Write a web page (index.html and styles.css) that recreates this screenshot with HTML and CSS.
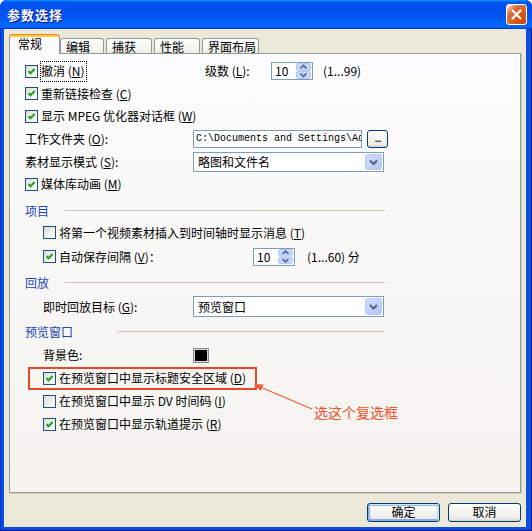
FILE: index.html
```html
<!DOCTYPE html>
<html lang="zh-CN">
<head>
    <meta charset="UTF-8">
    <title>参数选择</title>
    <link rel="stylesheet" href="styles.css">
</head>
<body>
<div class="window">
    <div class="titlebar">
        <span class="title">参数选择</span>
        <span class="close-btn">
            <svg width="13" height="13" viewBox="0 0 13 13"><path d="M2.5 2.5 L10.5 10.5 M10.5 2.5 L2.5 10.5" stroke="#fff" stroke-width="2.2" stroke-linecap="round"/></svg>
        </span>
    </div>

    <div class="client">
        <div class="tabs">
            <span class="tab active">常规</span>
            <span class="tab">编辑</span>
            <span class="tab t-wide">捕获</span>
            <span class="tab t-wide">性能</span>
            <span class="tab t-long">界面布局</span>
        </div>

        <div class="panel">
            <div class="group group-a">
                <div class="row">
                    <label class="check cell-first">
                        <span class="cb on"><svg width="11" height="11" viewBox="0 0 11 11"><path d="M2.5 5.2 L4.5 7.3 L8.6 3" fill="none" stroke="#21a121" stroke-width="2"/></svg></span>
                        <span class="focus">撤消 (<u>N</u>)</span>
                    </label>
                    <span class="lbl-levels">级数 (<u>L</u>):</span>
                    <span class="spin">
                        <span class="spin-val">10</span>
                        <svg class="spin-btns" width="15" height="16" viewBox="0 0 15 16"><rect x="0.5" y="0.5" width="14" height="7" rx="1.5" fill="#c6d6fb" stroke="#b4c7f5"/><rect x="0.5" y="8.5" width="14" height="7" rx="1.5" fill="#c6d6fb" stroke="#b4c7f5"/><path d="M4.5 5.5 L7.5 2.5 L10.5 5.5" fill="none" stroke="#4d6185" stroke-width="1.6"/><path d="M4.5 10.5 L7.5 13.5 L10.5 10.5" fill="none" stroke="#4d6185" stroke-width="1.6"/></svg>
                    </span>
                    <span class="range">(1...99)</span>
                </div>
                <div class="row">
                    <label class="check">
                        <span class="cb on"><svg width="11" height="11" viewBox="0 0 11 11"><path d="M2.5 5.2 L4.5 7.3 L8.6 3" fill="none" stroke="#21a121" stroke-width="2"/></svg></span>
                        重新链接检查 (<u>C</u>)
                    </label>
                </div>
                <div class="row">
                    <label class="check">
                        <span class="cb on"><svg width="11" height="11" viewBox="0 0 11 11"><path d="M2.5 5.2 L4.5 7.3 L8.6 3" fill="none" stroke="#21a121" stroke-width="2"/></svg></span>
                        显示 MPEG 优化器对话框 (<u>W</u>)
                    </label>
                </div>
                <div class="row">
                    <span class="field-label">工作文件夹 (<u>O</u>):</span>
                    <span class="textbox path">C:\Documents and Settings\Ad</span>
                    <span class="browse">...</span>
                </div>
                <div class="row">
                    <span class="field-label">素材显示模式 (<u>S</u>):</span>
                    <span class="select">
                        <span class="select-val">略图和文件名</span>
                        <svg class="drop" width="17" height="16" viewBox="0 0 17 16"><defs><linearGradient id="dg" x1="0" y1="0" x2="1" y2="1"><stop offset="0" stop-color="#d2defd"/><stop offset="1" stop-color="#b1c5f5"/></linearGradient></defs><rect x="0.5" y="0.5" width="16" height="15" rx="2" fill="url(#dg)" stroke="#b9cbf4"/><path d="M5 6.5 L8.5 10 L12 6.5" fill="none" stroke="#4d6185" stroke-width="2"/></svg>
                    </span>
                </div>
                <div class="row">
                    <label class="check">
                        <span class="cb on"><svg width="11" height="11" viewBox="0 0 11 11"><path d="M2.5 5.2 L4.5 7.3 L8.6 3" fill="none" stroke="#21a121" stroke-width="2"/></svg></span>
                        媒体库动画 (<u>M</u>)
                    </label>
                </div>
            </div>

            <div class="section"><span class="section-label">项目</span><span class="section-line"></span></div>
            <div class="group group-b">
                <div class="row">
                    <label class="check">
                        <span class="cb"></span>
                        将第一个视频素材插入到时间轴时显示消息 (<u>T</u>)
                    </label>
                </div>
                <div class="row">
                    <label class="check cell-autosave">
                        <span class="cb on"><svg width="11" height="11" viewBox="0 0 11 11"><path d="M2.5 5.2 L4.5 7.3 L8.6 3" fill="none" stroke="#21a121" stroke-width="2"/></svg></span>
                        自动保存间隔 (<u>V</u>)：
                    </label>
                    <span class="spin">
                        <span class="spin-val">10</span>
                        <svg class="spin-btns" width="15" height="15" viewBox="0 0 15 15"><rect x="0.5" y="0.5" width="14" height="6.5" rx="1.5" fill="#c6d6fb" stroke="#b4c7f5"/><rect x="0.5" y="8" width="14" height="6.5" rx="1.5" fill="#c6d6fb" stroke="#b4c7f5"/><path d="M4.5 5 L7.5 2.2 L10.5 5" fill="none" stroke="#4d6185" stroke-width="1.6"/><path d="M4.5 10 L7.5 12.8 L10.5 10" fill="none" stroke="#4d6185" stroke-width="1.6"/></svg>
                    </span>
                    <span class="range wide-gap">(1...60) 分</span>
                </div>
            </div>

            <div class="section"><span class="section-label">回放</span><span class="section-line"></span></div>
            <div class="group group-b playback">
                <div class="row">
                    <span class="field-label short">即时回放目标 (<u>G</u>):</span>
                    <span class="select tall">
                        <span class="select-val">预览窗口</span>
                        <svg class="drop" width="17" height="17" viewBox="0 0 17 17"><defs><linearGradient id="dg2" x1="0" y1="0" x2="1" y2="1"><stop offset="0" stop-color="#d2defd"/><stop offset="1" stop-color="#b1c5f5"/></linearGradient></defs><rect x="0.5" y="0.5" width="16" height="16" rx="2" fill="url(#dg2)" stroke="#b9cbf4"/><path d="M5 7 L8.5 10.5 L12 7" fill="none" stroke="#4d6185" stroke-width="2"/></svg>
                    </span>
                </div>
            </div>

            <div class="section tight"><span class="section-label wide">预览窗口</span><span class="section-line short"></span></div>
            <div class="group group-c">
                <div class="row">
                    <span class="field-label color-label">背景色:</span>
                    <span class="swatch"></span>
                </div>
                <div class="row marked">
                    <label class="check">
                        <span class="cb on"><svg width="11" height="11" viewBox="0 0 11 11"><path d="M2.5 5.2 L4.5 7.3 L8.6 3" fill="none" stroke="#21a121" stroke-width="2"/></svg></span>
                        在预览窗口中显示标题安全区域 (<u>D</u>)
                    </label>
                </div>
                <div class="row">
                    <label class="check">
                        <span class="cb"></span>
                        在预览窗口中显示 DV 时间码 (<u>I</u>)
                    </label>
                </div>
                <div class="row">
                    <label class="check">
                        <span class="cb on"><svg width="11" height="11" viewBox="0 0 11 11"><path d="M2.5 5.2 L4.5 7.3 L8.6 3" fill="none" stroke="#21a121" stroke-width="2"/></svg></span>
                        在预览窗口中显示轨道提示 (<u>R</u>)
                    </label>
                </div>
            </div>
        </div>

        <div class="buttons">
            <span class="btn default">确定</span>
            <span class="btn">取消</span>
        </div>
    </div>

    <!-- annotation drawn over the dialog -->
    <svg class="arrow" width="532" height="531" viewBox="0 0 532 531">
        <line x1="312" y1="409" x2="258" y2="386" stroke="#f05a36" stroke-width="1.2"/>
        <polygon points="254,384 263.7,384.6 260.6,391" fill="#f05a36"/>
    </svg>
    <span class="note">选这个复选框</span>
</div>
</body>
</html>
```

FILE: styles.css
```css
* {
    box-sizing: border-box;
}
html, body {
    margin: 0;
    padding: 0;
}
body {
    width: 532px;
    height: 531px;
    overflow: hidden;
    background: #fff;
    color: #000;
    font-family: "Noto Sans CJK SC", "Liberation Sans", sans-serif;
    font-size: 12px;
    line-height: 16px;
}
u {
    text-decoration: underline;
    text-underline-offset: 1px;
}

/* window frame */
.window {
    position: relative;
    width: 532px;
    height: 531px;
    display: flex;
    flex-direction: column;
    background: #0a4fe0;
    border-radius: 7px 7px 0 0;
    box-shadow: inset -1px -1px #00138c, inset 1px 1px #0831d9;
    overflow: hidden;
}
.titlebar {
    flex: none;
    height: 29px;
    display: flex;
    align-items: center;
    justify-content: space-between;
    padding: 0 5px 0 7px;
    background: linear-gradient(180deg, #0997ff, #0053ee 8%, #0050ee 40%, #06f 88%, #06f 93%, #005bff 95%, #003dd7 96%, #003dd7);
    border-radius: 7px 7px 0 0;
}
.title {
    color: #fff;
    font-weight: bold;
    font-size: 13px;
    letter-spacing: 1px;
    text-shadow: 1px 1px #0f1089;
}
.close-btn {
    width: 21px;
    height: 21px;
    border: 1px solid #fff;
    border-radius: 3px;
    display: flex;
    align-items: center;
    justify-content: center;
    background: radial-gradient(circle at 90% 90%, #cc4600 0%, #dc6527 55%, #cd7546 70%, #ffccb2 90%, #fff 100%);
}

.client {
    flex: 1;
    margin: 0 6px 4px 4px;
    padding: 5px 5px 0 5px;
    background: #ece9d8;
    display: flex;
    flex-direction: column;
}

/* tabs */
.tabs {
    position: relative;
    z-index: 1;
    display: flex;
    align-items: flex-end;
    height: 20px;
    margin-bottom: -1px;
}
.tab {
    width: 44px;
    height: 15px;
    margin-bottom: 1px;
    margin-left: 2px;
    padding-left: 5px;
    line-height: 15px;
    border: 1px solid #919b9c;
    border-bottom: none;
    border-radius: 3px 3px 0 0;
    background: linear-gradient(180deg, #fff, #fafaf9 26%, #f0f0ea 95%, #ecebe6);
}
.tab.t-wide {
    width: 46px;
}
.tab.t-long {
    width: 57px;
}
.tab.active {
    width: 51px;
    height: 20px;
    margin: 0;
    padding-left: 8px;
    line-height: 18px;
    background: #fcfcfe;
    border-top: 1px solid #e68b2c;
    box-shadow: inset 0 2px #ffc73c;
}
.tab.active + .tab {
    margin-left: 0;
}

/* tab page */
.panel {
    flex: none;
    height: 440px;
    padding-top: 6px;
    border: 1px solid #919b9c;
    background: linear-gradient(180deg, #fcfcfe, #f4f3ee);
    box-shadow: 1px 1px 0 #d0cebf;
}
.row {
    display: flex;
    align-items: center;
}
.group-a {
    padding-left: 15px;
}
.group-a .row {
    height: 22.6px;
}
.group-b {
    padding-left: 33px;
}
.group-b .row {
    height: 22px;
}
.group-b .row + .row {
    margin-top: 2px;
}
.group-b.playback {
    padding-top: 2px;
}
.group-c {
    padding-left: 33px;
    padding-top: 1px;
}
.group-c .row {
    height: 23px;
}

.section {
    display: flex;
    align-items: center;
    height: 22px;
    margin-top: 4px;
    padding-left: 15px;
}
.section.tight {
    margin-top: 3px;
}
.section-label {
    width: 40px;
    color: #1c44b4;
}
.section-label.wide {
    width: 92px;
}
.section-line {
    width: 320px;
    height: 1px;
    background: #c9c6b6;
}
.section-line.short {
    width: 268px;
}

/* checkboxes */
.check {
    display: flex;
    align-items: center;
    white-space: nowrap;
}
.cb {
    flex: none;
    width: 13px;
    height: 13px;
    margin-right: 3px;
    border: 1px solid #1c5180;
    background: linear-gradient(135deg, #dcdcd7, #fff);
    display: inline-flex;
}
.focus {
    outline: 1px dotted #000;
    padding: 1px 1px 2px 0;
}
.cell-first {
    width: 180px;
}
.cell-autosave {
    width: 210px;
}
.lbl-levels {
    width: 66px;
}
.field-label {
    width: 168px;
    white-space: nowrap;
}
.field-label.short,
.field-label.color-label {
    width: 150px;
}

/* edit controls */
.spin {
    width: 42px;
    height: 18px;
    padding: 0 1px 0 3px;
    border: 1px solid #7f9db9;
    background: #fff;
    display: flex;
    align-items: center;
    justify-content: space-between;
}
.range {
    margin-left: 10px;
    white-space: nowrap;
}
.range.wide-gap {
    margin-left: 12px;
}
.textbox {
    width: 169px;
    height: 18px;
    padding-left: 2px;
    border: 1px solid #7f9db9;
    background: #fff;
    overflow: hidden;
    white-space: nowrap;
}
.path {
    font-family: "Liberation Mono", "DejaVu Sans Mono", monospace;
    font-size: 10px;
    line-height: 16px;
}
.browse {
    width: 21px;
    height: 18px;
    margin-left: 5px;
    border: 1px solid #003c74;
    border-radius: 3px;
    background: linear-gradient(180deg, #fff, #ecebe6 86%, #d6d0c5);
    font-size: 11px;
    line-height: 12px;
    text-align: center;
    letter-spacing: -1px;
}
.select {
    width: 191px;
    height: 20px;
    padding: 1px;
    border: 1px solid #7f9db9;
    background: #fff;
    display: flex;
    align-items: center;
}
.select.tall {
    height: 21px;
}
.select-val {
    flex: 1;
    padding-left: 3px;
}
.drop {
    flex: none;
}
.swatch {
    width: 16px;
    height: 15px;
    border: 1px solid #8a8a8a;
    box-shadow: inset 0 0 0 1px #d8d8d8;
    background: #000;
}

/* highlighted row */
.row.marked {
    width: 229px;
    margin-left: -15px;
    padding-left: 13px;
    border: 2px solid #e9462a;
}

/* dialog buttons */
.buttons {
    display: flex;
    justify-content: flex-end;
    gap: 8px;
    margin-top: 10px;
}
.btn {
    width: 73px;
    height: 19px;
    border: 1px solid #003c74;
    border-radius: 3px;
    background: linear-gradient(180deg, #fff, #ecebe6 86%, #d6d0c5);
    text-align: center;
    line-height: 16px;
}
.btn.default {
    box-shadow: inset -1px 1px #cee7ff, inset 1px 2px #98b8ea, inset -2px 2px #bcd4f6, inset 1px -1px #89ade4, inset 2px -2px #89ade4;
}

/* annotation */
.arrow {
    position: absolute;
    left: 0;
    top: 0;
    pointer-events: none;
}
.note {
    position: absolute;
    left: 314px;
    top: 403px;
    color: #f0502a;
    font-size: 14px;
    line-height: 18px;
}
```
